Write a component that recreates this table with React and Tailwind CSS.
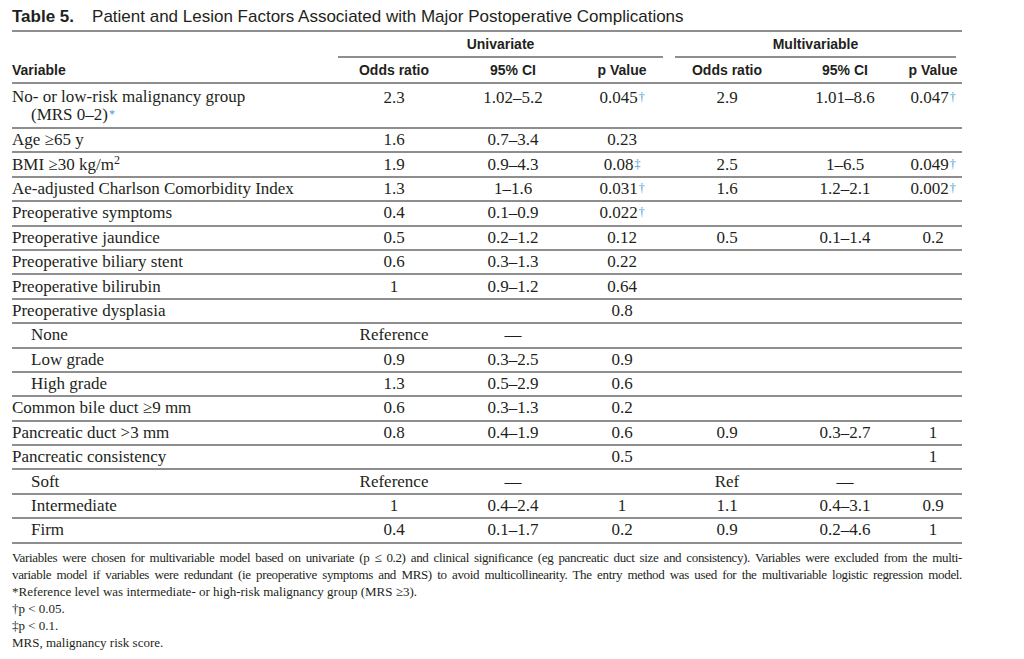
import React from 'react';

const serif = { fontFamily: '"Liberation Serif", "Times New Roman", serif' };

const Dag = ({ c = '†' }) => (
  <sup className="text-[12px] text-[#3f9bd3] relative -top-[2px] ml-[1px]">{c}</sup>
);

const rows = [
  ['Age ≥65 y', 0, '1.6', '0.7–3.4', '0.23', '', '', ''],
  [<>BMI ≥30 kg/m<sup className="text-[12px]">2</sup></>, 0, '1.9', '0.9–4.3', <>0.08<Dag c="‡" /></>, '2.5', '1–6.5', <>0.049<Dag /></>],
  ['Ae-adjusted Charlson Comorbidity Index', 0, '1.3', '1–1.6', <>0.031<Dag /></>, '1.6', '1.2–2.1', <>0.002<Dag /></>],
  ['Preoperative symptoms', 0, '0.4', '0.1–0.9', <>0.022<Dag /></>, '', '', ''],
  ['Preoperative jaundice', 0, '0.5', '0.2–1.2', '0.12', '0.5', '0.1–1.4', '0.2'],
  ['Preoperative biliary stent', 0, '0.6', '0.3–1.3', '0.22', '', '', ''],
  ['Preoperative bilirubin', 0, '1', '0.9–1.2', '0.64', '', '', ''],
  ['Preoperative dysplasia', 0, '', '', '0.8', '', '', ''],
  ['None', 1, 'Reference', '—', '', '', '', ''],
  ['Low grade', 1, '0.9', '0.3–2.5', '0.9', '', '', ''],
  ['High grade', 1, '1.3', '0.5–2.9', '0.6', '', '', ''],
  ['Common bile duct ≥9 mm', 0, '0.6', '0.3–1.3', '0.2', '', '', ''],
  ['Pancreatic duct >3 mm', 0, '0.8', '0.4–1.9', '0.6', '0.9', '0.3–2.7', '1'],
  ['Pancreatic consistency', 0, '', '', '0.5', '', '', '1'],
  ['Soft', 1, 'Reference', '—', '', 'Ref', '—', ''],
  ['Intermediate', 1, '1', '0.4–2.4', '1', '1.1', '0.4–3.1', '0.9'],
  ['Firm', 1, '0.4', '0.1–1.7', '0.2', '0.9', '0.2–4.6', '1'],
];

const grid = 'grid grid-cols-[326px_112px_126px_92px_118px_118px_58px]';

export default function App() {
  return (
    <div className="w-[1024px] h-[659px] bg-white text-[#231f20] overflow-hidden">
      <div className="ml-[12px] w-[950px]">
        {/* Title */}
        <div className="h-[32px] pt-[4px] border-b-2 border-[#8e8e8e] flex items-center text-[17px] font-['Liberation_Sans',Arial,sans-serif]">
          <span className="font-bold">Table 5.</span>
          <span className="ml-[18px]">Patient and Lesion Factors Associated with Major Postoperative Complications</span>
        </div>

        {/* Group headers */}
        <div className={`${grid} h-[26px] text-[14px] font-bold font-['Liberation_Sans',Arial,sans-serif]`}>
          <div />
          <div className="col-span-3 mr-[5px] border-b-2 border-[#8e8e8e] flex items-center justify-center">Univariate</div>
          <div className="col-span-3 ml-[7px] mr-[6px] border-b-2 border-[#8e8e8e] flex items-center justify-center">Multivariable</div>
        </div>

        {/* Column headers */}
        <div className={`${grid} h-[26px] border-b-2 border-[#8e8e8e] text-[14px] font-bold font-['Liberation_Sans',Arial,sans-serif] items-center`}>
          <div>Variable</div>
          <div className="text-center">Odds ratio</div>
          <div className="text-center">95% CI</div>
          <div className="text-center">p Value</div>
          <div className="text-center">Odds ratio</div>
          <div className="text-center">95% CI</div>
          <div className="text-center">p Value</div>
        </div>

        {/* Body */}
        <div style={serif} className="text-[17px]">
          <div className={`${grid} h-[45px] border-b-2 border-[#8e8e8e] leading-[18px] items-center`}>
            <div>
              <div>No- or low-risk malignancy group</div>
              <div className="pl-[19px]">(MRS 0–2)<Dag c="*" /></div>
            </div>
            <div className="text-center self-start pt-[5px]">2.3</div>
            <div className="text-center self-start pt-[5px]">1.02–5.2</div>
            <div className="text-center self-start pt-[5px]">0.045<Dag /></div>
            <div className="text-center self-start pt-[5px]">2.9</div>
            <div className="text-center self-start pt-[5px]">1.01–8.6</div>
            <div className="text-center self-start pt-[5px]">0.047<Dag /></div>
          </div>
          {rows.map((r, i) => (
            <div key={i} className={`${grid} h-[24.4px] border-b-2 border-[#8e8e8e] items-center leading-[20px]`}>
              <div className={r[1] ? 'pl-[19px]' : ''}>{r[0]}</div>
              {r.slice(2).map((v, j) => (
                <div key={j} className="text-center whitespace-nowrap">{v}</div>
              ))}
            </div>
          ))}
        </div>

        {/* Footnotes */}
        <div style={serif} className="pt-[5px] text-[13px] leading-[17px]">
          <div className="text-justify [text-align-last:justify] whitespace-nowrap tracking-[-0.35px]">Variables were chosen for multivariable model based on univariate (p ≤ 0.2) and clinical significance (eg pancreatic duct size and consistency). Variables were excluded from the multi-</div>
          <div className="text-justify [text-align-last:justify] whitespace-nowrap tracking-[-0.35px]">variable model if variables were redundant (ie preoperative symptoms and MRS) to avoid multicollinearity. The entry method was used for the multivariable logistic regression model.</div>
          <div>*Reference level was intermediate- or high-risk malignancy group (MRS ≥3).</div>
          <div>†p &lt; 0.05.</div>
          <div>‡p &lt; 0.1.</div>
          <div>MRS, malignancy risk score.</div>
        </div>
      </div>
    </div>
  );
}
